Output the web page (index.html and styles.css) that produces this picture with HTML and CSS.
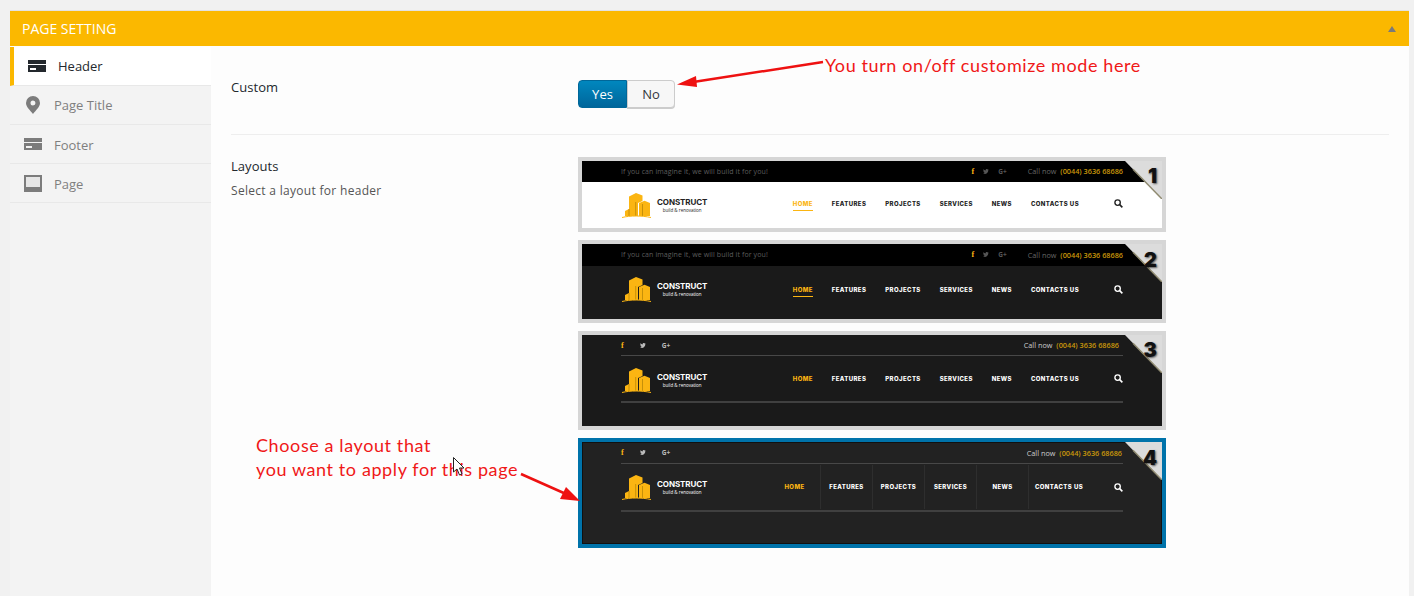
FILE: index.html
```html
<!DOCTYPE html>
<html lang="en">
<head>
  <meta charset="UTF-8">
  <meta name="viewport" content="width=device-width, initial-scale=1.0">
  <title>Page Setting</title>
  <link rel="stylesheet" href="styles.css">
</head>
<body>
  <svg class="defs" width="0" height="0" aria-hidden="true">
    <symbol id="logo" viewBox="0 0 29 25">
      <path fill="#fbb512" d="M7 3.500 14 0l6.500 2.500V8L16 10v13H3v-5l4-2z"/>
      <path fill="#fbb512" d="M17 10l5.500-2.300L28 10v13H17z"/>
      <path fill="none" stroke="#b98608" stroke-width=".8" d="M7 16v7M13.700 9v14M20.500 11v12"/>
      <path fill="none" stroke="#fbb512" d="M0 24.500C8 22.500 20 22.500 29 24.500"/>
    </symbol>
    <symbol id="search" viewBox="0 0 10 10">
      <circle cx="4" cy="4" r="3" fill="none" stroke="currentColor" stroke-width="1.500"/>
      <path d="M6.300 6.300 9.300 9.300" stroke="currentColor" stroke-width="1.800"/>
    </symbol>
    <symbol id="bird" viewBox="0 0 10 8">
      <path fill="currentColor" d="M10 1 8.800 1.800C8.800 5 6.500 8 3 8 2 8 1 7.700 0 7.100c1.200.1 2.200-.2 3-.8-1 0-1.700-.6-2-1.400h.9C1 4.600.3 3.800.3 2.800c.3.100.6.200.9.200C.4 2.300.2 1.200.7.400c.9 1.100 2.200 1.800 3.700 1.900C4.100 1 5.100 0 6.300 0c.6 0 1.100.2 1.500.6L9.100.2 8.400 1.300z"/>
    </symbol>
    <symbol id="corner" viewBox="0 0 37 38">
      <path fill="#dcdcdc" d="M0 0H37V38z"/>
      <path fill="none" stroke="#8f8a70" stroke-width="1.500" d="M8 8.200 37 38"/>
    </symbol>
  </svg>

  <div class="panel">
    <div class="panel-head">
      <span>PAGE SETTING</span>
      <i class="caret"></i>
    </div>
    <div class="panel-body">
      <ul class="tabs">
        <li class="tab active">
          <svg class="tab-icon" viewBox="0 0 18 12"><path fill="currentColor" d="M0 0h18v4H0zM0 5h18v7H0z"/><path fill="#fff" d="M2 8h6v2H2z"/></svg>
          Header
        </li>
        <li class="tab">
          <svg class="tab-icon pin" viewBox="0 0 14 18"><path fill="currentColor" fill-rule="evenodd" d="M7 0a7 7 0 0 1 7 7c0 4-4 7-7 11C4 14 0 11 0 7a7 7 0 0 1 7-7zm0 4.500a2.500 2.500 0 1 0 0 5 2.500 2.500 0 0 0 0-5z"/></svg>
          Page Title
        </li>
        <li class="tab">
          <svg class="tab-icon" viewBox="0 0 18 12"><path fill="currentColor" d="M0 0h18v4H0zM0 5h18v7H0z"/><path fill="#f3f3f3" d="M2 8h6v2H2z"/></svg>
          Footer
        </li>
        <li class="tab">
          <svg class="tab-icon page-icon" viewBox="0 0 18 17"><path fill="currentColor" d="M0 0h18v17H0z"/><path fill="#e6e6e6" d="M2 2h14v10H2z"/></svg>
          Page
        </li>
      </ul>

      <div class="content">
        <div class="row row-custom">
          <div class="label">
            <h4>Custom</h4>
          </div>
          <div class="toggle">
            <button class="btn btn-on">Yes</button>
            <button class="btn">No</button>
          </div>
        </div>

        <div class="row row-layouts">
          <div class="label">
            <h4>Layouts</h4>
            <p>Select a layout for header</p>
          </div>
          <div class="cards">

            <div class="card">
              <div class="mini mini-1">
                <div class="mini-top">
                  <span class="tagline">If you can imagine it, we will build it for you!</span>
                  <span class="social social-right"><b>f</b><svg class="bird"><use href="#bird"/></svg><em>G+</em></span>
                  <span class="call">Call now <b>(0044) 3636 68686</b></span>
                </div>
                <div class="mini-main">
                  <svg class="logo"><use href="#logo"/></svg>
                  <div class="brand"><strong>CONSTRUCT</strong><small>build &amp; renovation</small></div>
                  <nav class="nav">
                    <a class="on">HOME</a><a>FEATURES</a><a>PROJECTS</a><a>SERVICES</a><a>NEWS</a><a>CONTACTS US</a>
                  </nav>
                  <svg class="find"><use href="#search"/></svg>
                </div>
                <svg class="corner"><use href="#corner"/></svg>
                <span class="num">1</span>
              </div>
            </div>

            <div class="card">
              <div class="mini mini-2">
                <div class="mini-top">
                  <span class="tagline">If you can imagine it, we will build it for you!</span>
                  <span class="social social-right"><b>f</b><svg class="bird"><use href="#bird"/></svg><em>G+</em></span>
                  <span class="call">Call now <b>(0044) 3636 68686</b></span>
                </div>
                <div class="mini-main">
                  <svg class="logo"><use href="#logo"/></svg>
                  <div class="brand"><strong>CONSTRUCT</strong><small>build &amp; renovation</small></div>
                  <nav class="nav">
                    <a class="on">HOME</a><a>FEATURES</a><a>PROJECTS</a><a>SERVICES</a><a>NEWS</a><a>CONTACTS US</a>
                  </nav>
                  <svg class="find"><use href="#search"/></svg>
                </div>
                <svg class="corner"><use href="#corner"/></svg>
                <span class="num">2</span>
              </div>
            </div>

            <div class="card">
              <div class="mini mini-3">
                <div class="mini-top">
                  <span class="social"><b>f</b><svg class="bird"><use href="#bird"/></svg><em>G+</em></span>
                  <span class="call">Call now <b>(0044) 3636 68686</b></span>
                </div>
                <div class="mini-main">
                  <svg class="logo"><use href="#logo"/></svg>
                  <div class="brand"><strong>CONSTRUCT</strong><small>build &amp; renovation</small></div>
                  <nav class="nav">
                    <a class="on">HOME</a><a>FEATURES</a><a>PROJECTS</a><a>SERVICES</a><a>NEWS</a><a>CONTACTS US</a>
                  </nav>
                  <svg class="find"><use href="#search"/></svg>
                </div>
                <svg class="corner"><use href="#corner"/></svg>
                <span class="num">3</span>
              </div>
            </div>

            <div class="card selected">
              <div class="mini mini-4">
                <div class="mini-top">
                  <span class="social"><b>f</b><svg class="bird"><use href="#bird"/></svg><em>G+</em></span>
                  <span class="call">Call now <b>(0044) 3636 68686</b></span>
                </div>
                <div class="mini-main">
                  <svg class="logo"><use href="#logo"/></svg>
                  <div class="brand"><strong>CONSTRUCT</strong><small>build &amp; renovation</small></div>
                  <nav class="nav">
                    <a class="on">HOME</a><a>FEATURES</a><a>PROJECTS</a><a>SERVICES</a><a>NEWS</a><a>CONTACTS US</a>
                  </nav>
                  <svg class="find"><use href="#search"/></svg>
                </div>
                <svg class="corner"><use href="#corner"/></svg>
                <span class="num">4</span>
              </div>
            </div>

          </div>
        </div>
      </div>
    </div>
  </div>

  <!-- notes drawn on top of the screenshot -->
  <div class="note note-top">You turn on/off customize mode here</div>
  <div class="note note-left">Choose a layout that<br>you want to apply for this page</div>
  <svg class="arrows" viewBox="0 0 1414 596">
    <path d="M823 62 690 82.500" stroke="#ee1111" stroke-width="2.500"/>
    <path d="M677 84.500 696 76 697 87z" fill="#ee1111"/>
    <path d="M521 474 566 494" stroke="#ee1111" stroke-width="2.500"/>
    <path d="M580 501 560 499 566 487z" fill="#ee1111"/>
    <path d="M453.500 457.500V472L457 469 459.500 475 462 474 459.500 468H464z" fill="#fff" stroke="#222"/>
  </svg>
</body>
</html>
```

FILE: styles.css
```css
* {
  box-sizing: border-box;
}

html, body {
  height: 596px;
  overflow: hidden;
}

body {
  margin: 0;
  padding: 10px 5px 0 10px;
  background: #f1f1f1;
  font-family: "Open Sans", sans-serif;
  font-size: 13px;
  color: #555;
}

.defs {
  position: absolute;
}

.panel {
  height: 586px;
  background: #fdfdfd;
  border-top: 1px solid #e2e2e2;
  display: flex;
  flex-direction: column;
}

.panel-head {
  height: 35px;
  flex: none;
  background: #fbb800;
  color: #fff;
  font-size: 14px;
  padding: 0 12px;
  display: flex;
  align-items: center;
  justify-content: space-between;
}

.caret {
  width: 0;
  height: 0;
  border: 4.500px solid transparent;
  border-top: 0;
  border-bottom: 6px solid #7a7a7a;
  margin-right: 1px;
  margin-top: 1px;
}

.panel-body {
  flex: 1;
  display: flex;
  padding-top: 1px;
}

/* left tabs */
.tabs {
  width: 201px;
  flex: none;
  margin: 0;
  padding: 0;
  list-style: none;
  background: #f3f3f3;
}

.tab {
  height: 39px;
  display: flex;
  align-items: center;
  gap: 12px;
  padding-left: 14px;
  border-bottom: 1px solid #e8e8e8;
  color: #7f7f7f;
  font-size: 13px;
}

.tab:nth-child(n+3) {
  padding-top: 2px;
}

.tab:nth-child(n+3) .tab-icon {
  margin-top: -2px;
}

.tab.active {
  background: #fff;
  color: #23282d;
  border-left: 4px solid #fbb800;
}

.tab-icon {
  width: 18px;
  height: 12px;
  flex: none;
  color: #7c7c7c;
}

.active .tab-icon {
  color: #23282d;
}

.tab-icon.pin {
  width: 14px;
  height: 18px;
  margin: 0 2px;
}

.tab-icon.page-icon {
  height: 17px;
}

/* right side */
.content {
  flex: 1;
  padding: 0 20px;
}

.row {
  display: grid;
  grid-template-columns: 347px 1fr;
}

.row-custom {
  height: 88px;
  padding-top: 30px;
  border-bottom: 1px solid #eeeeee;
}

.row-layouts {
  padding-top: 21px;
}

.label h4 {
  margin: 0;
  font-size: 13px;
  font-weight: 400;
  line-height: 20px;
  letter-spacing: .05px;
  color: #23282d;
}

.label p {
  margin: 5px 0 0;
  font-size: 12px;
  line-height: 20px;
  letter-spacing: .3px;
  color: #555;
}

.toggle {
  display: flex;
  margin-top: 3px;
}

.btn {
  width: 48px;
  height: 28px;
  padding: 0;
  font: 13px "Open Sans", sans-serif;
  color: #32373c;
  background: #f7f7f7;
  border: 1px solid #ccc;
  border-radius: 0 4px 4px 0;
  box-shadow: 0 1px 0 #ccc;
}

.btn-on {
  width: 49px;
  color: #fff;
  background: linear-gradient(#0087be, #00669b);
  border-color: #006799;
  border-radius: 4px 0 0 4px;
  box-shadow: none;
}

.cards {
  display: flex;
  flex-direction: column;
  gap: 8px;
  width: 588px;
  margin-top: 1px;
}

.card {
  border: 4px solid #d6d6d6;
}

.card.selected {
  border-color: #0073aa;
}

/* small header previews */
.mini {
  position: relative;
  overflow: hidden;
  display: flex;
  flex-direction: column;
  background: #1a1a1a;
  color: #fff;
}

.mini-1 { height: 67px; background: #fff; color: #222; }
.mini-2 { height: 75px; }
.mini-3 { height: 91px; }
.mini-4 { height: 102px; background: #222; box-shadow: inset 0 0 0 1px #111; }

.mini-top {
  height: 21px;
  flex: none;
  display: flex;
  align-items: center;
  font-size: 7px;
  padding: 0 39px;
}

.mini-1 .mini-top, .mini-2 .mini-top {
  background: #000;
  color: #666;
  padding-bottom: 1px;
}

.mini-2 .mini-top {
  height: 22px;
}

.mini-3 .mini-top, .mini-4 .mini-top {
  margin: 0 39px;
  padding: 0;
  border-bottom: 1px solid #484848;
  box-sizing: content-box;
  color: #ccc;
}

.mini-3 .mini-top {
  height: 20px;
}

.tagline {
  color: #5c5c5c;
  letter-spacing: .1px;
}

.social {
  display: flex;
  align-items: center;
  gap: 16px;
  color: #bbb;
  font-size: 6.500px;
}

.social b {
  color: #fbb512;
  font-size: 8px;
  font-family: "Liberation Serif", serif;
}

.social em {
  font-style: normal;
  font-weight: 700;
}

.mini-1 .social, .mini-2 .social {
  color: #555;
  gap: 9px;
}

.social-right {
  margin-left: auto;
  margin-right: 21px;
}

.bird {
  width: 6px;
  height: 5px;
}

.call {
  font-size: 7.300px;
  white-space: nowrap;
}

.mini-3 .call, .mini-4 .call {
  margin-left: auto;
}

.mini-3 .call {
  margin-right: 4px;
}

.mini-4 .call {
  margin-right: 1px;
}

.call b {
  color: #c8960a;
  font-weight: 600;
  margin-left: 2px;
}

.mini-main {
  height: 46px;
  flex: none;
  display: flex;
  align-items: center;
  padding: 0 39px 0 40px;
}

.mini-1 .mini-main {
  padding-bottom: 3px;
}

.mini-3 .mini-main, .mini-4 .mini-main {
  margin: 0 39px;
  padding: 0 0 0 1px;
  border-bottom: 2px solid #404040;
  box-sizing: content-box;
}

.mini-3 .mini-main {
  height: 45px;
}

.logo {
  width: 29px;
  height: 25px;
  flex: none;
}

.mini-1 .logo, .mini-1 .brand, .mini-3 .logo, .mini-3 .brand {
  margin-top: 3px;
}

.brand {
  margin-left: 6px;
  display: flex;
  flex-direction: column;
  align-items: center;
}

.brand strong {
  font: 700 8px/9px "Inter", sans-serif;
  letter-spacing: -.1px;
}

.brand small {
  font-size: 4.500px;
  line-height: 6px;
}

.nav {
  margin-left: auto;
  display: flex;
  gap: 19px;
  font: 800 6px "Inter", sans-serif;
  letter-spacing: .4px;
  white-space: nowrap;
}

.nav a {
  position: relative;
}

.nav .on {
  color: #fbb512;
}

.mini-1 .on::after, .mini-2 .on::after {
  content: "";
  position: absolute;
  left: 0;
  right: 0;
  bottom: -4px;
  height: 1px;
  background: #fbb512;
}

.mini-4 .nav {
  gap: 0;
  align-self: stretch;
  align-items: center;
}

.mini-4 .nav a {
  width: 52px;
  height: 44px;
  line-height: 44px;
  text-align: center;
  border-right: 1px solid #2e2e2e;
}

.mini-4 .nav a:last-child {
  width: 60px;
  border-right: 0;
}

.find {
  width: 9px;
  height: 9px;
  flex: none;
  margin-left: 35px;
}

.mini-4 .find {
  margin-left: 25px;
}

.corner {
  position: absolute;
  top: 0;
  right: 0;
  width: 37px;
  height: 38px;
}

.num {
  position: absolute;
  top: 4px;
  right: 5px;
  font: 900 20px/22px "Inter", sans-serif;
  color: #111;
  text-shadow: 1px 1px 2px rgba(0, 0, 0, .6);
}

.mini-2 .num, .mini-4 .num {
  top: 5px;
}

/* annotations */
.note {
  position: absolute;
  font-family: "Lato", sans-serif;
  font-size: 18px;
  letter-spacing: .6px;
  line-height: 24px;
  color: #f01818;
}

.note-top {
  left: 825px;
  top: 53px;
}

.note-left {
  left: 256px;
  top: 433px;
}

.arrows {
  position: absolute;
  left: 0;
  top: 0;
  width: 1414px;
  height: 596px;
  pointer-events: none;
}
```
